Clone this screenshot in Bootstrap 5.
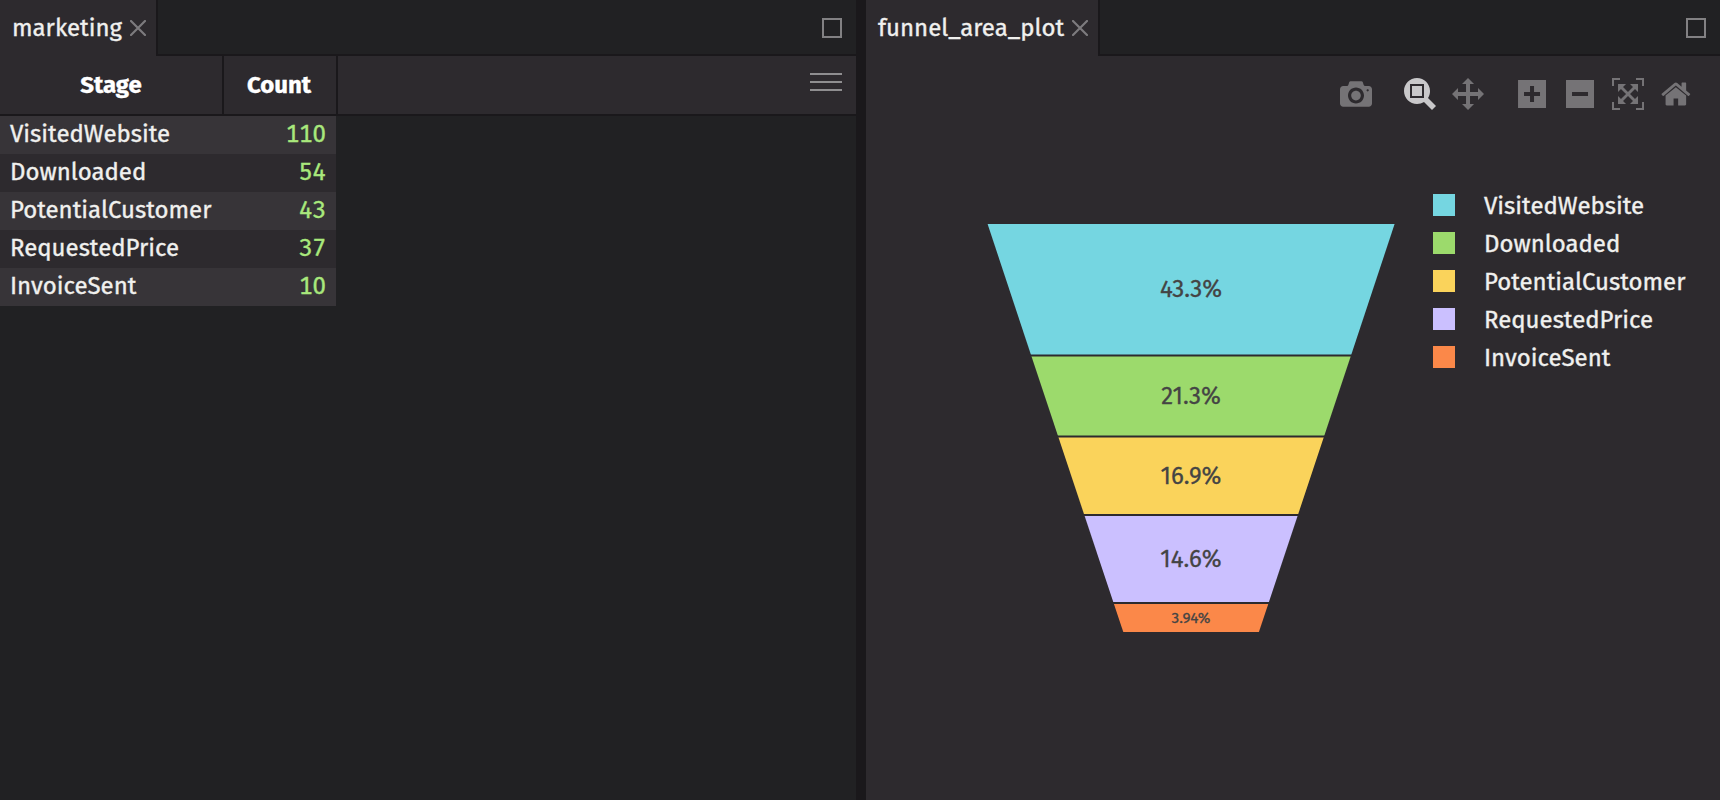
<!DOCTYPE html>
<html lang="en" data-bs-theme="dark">
<head>
<meta charset="utf-8">
<meta name="viewport" content="width=device-width, initial-scale=1">
<title>marketing</title>
<link href="https://cdn.jsdelivr.net/npm/bootstrap@5.3.0/dist/css/bootstrap.min.css" rel="stylesheet">
<style>
  :root { --line: #1a181b; --pane: #2d2a2e; --deep: #212123; --zebra: #373438; --ink: #f0f0ee; --muted: #757376; }
  body { font-family: "Fira Sans", "Noto Sans", sans-serif; font-size: 24px; line-height: 38px; color: var(--ink); background: var(--line); white-space: nowrap; -webkit-text-stroke: .35px; }
  .pane { background: var(--deep); min-width: 0; }
  .pane-left { width: 856px; }
  .pane-right { width: 854px; }
  .tab-strip { height: 56px; }
  .doc-tab { background: var(--pane); border-right: 2px solid var(--line); padding-left: 12px; }
  .doc-tab svg { margin-right: 10px; }
  .strip-rest { border-bottom: 2px solid var(--line); padding-right: 14px; }
  .max-box { width: 20px; height: 20px; border: 2px solid #828183; margin-bottom: -2px; }
  .grid-head { height: 60px; background: var(--pane); border-bottom: 2px solid var(--line); color: #fff; }
  .grid-head > .col-head { border-right: 2px solid var(--line); height: 58px; line-height: 58px; }
  .w-stage { width: 224px; }
  .w-count { width: 114px; padding-right: 2px; }
  .burger { width: 32px; height: 18px; margin: 17px 14px 0 0; }
  .burger i { display: block; height: 2px; background: #8f8e90; }
  .grid-rows { width: 336px; }
  .grid-line { height: 38px; line-height: 36px; padding: 0 10px; background: var(--pane); }
  .grid-line:nth-child(odd) { background: var(--zebra); }
  .num { color: #a9e87c; font-variant-numeric: tabular-nums; }
  .plot-body { background: var(--pane); }
  .modebar { height: 76px; padding: 22px 20px 0 0; }
  .modebar button { width: 48px; height: 32px; border: 0; background: none; padding: 0; fill: var(--muted); }
  .modebar button.is-on { fill: #c9c8ca; }
  .modebar svg { display: block; margin: auto; height: 32px; }
  .funnel { width: 567px; height: 668px; }
  .funnel text { fill: #444; stroke: #444; stroke-width: .3px; text-anchor: middle; }
  .legend-list { padding-top: 54px; }
  .key-box { width: 22px; height: 22px; margin-right: 29px; }
  .legend-list > div { height: 38px; }
  .key-box + span { line-height: 36px; padding-top: 2px; }
</style>
<script src="https://cdn.jsdelivr.net/npm/bootstrap@5.3.0/dist/js/bootstrap.bundle.min.js"></script>
</head>
<body class="vh-100 overflow-hidden d-flex justify-content-between">

<section class="pane pane-left d-flex flex-column">
  <div class="tab-strip d-flex">
    <div class="doc-tab d-flex align-items-center justify-content-between" style="width:158px"><span>marketing</span>
      <svg width="16" height="16" viewBox="0 0 16 16"><path d="M1 1 15 15M15 1 1 15" stroke="#7d7b7e" stroke-width="2.2" stroke-linecap="round"/></svg></div>
    <div class="strip-rest flex-grow-1 d-flex align-items-center justify-content-end"><div class="max-box"></div></div>
  </div>
  <div class="grid-head d-flex fw-bold text-center">
    <div class="col-head w-stage">Stage</div>
    <div class="col-head w-count">Count</div>
    <div class="burger ms-auto d-flex flex-column justify-content-between"><i></i><i></i><i></i></div>
  </div>
  <div class="grid-rows">
    <div class="grid-line d-flex justify-content-between"><span>VisitedWebsite</span><span class="num">110</span></div>
    <div class="grid-line d-flex justify-content-between"><span>Downloaded</span><span class="num">54</span></div>
    <div class="grid-line d-flex justify-content-between"><span>PotentialCustomer</span><span class="num">43</span></div>
    <div class="grid-line d-flex justify-content-between"><span>RequestedPrice</span><span class="num">37</span></div>
    <div class="grid-line d-flex justify-content-between"><span>InvoiceSent</span><span class="num">10</span></div>
  </div>
</section>

<section class="pane pane-right d-flex flex-column">
  <div class="tab-strip d-flex">
    <div class="doc-tab d-flex align-items-center justify-content-between" style="width:234px"><span>funnel_area_plot</span>
      <svg width="16" height="16" viewBox="0 0 16 16"><path d="M1 1 15 15M15 1 1 15" stroke="#7d7b7e" stroke-width="2.2" stroke-linecap="round"/></svg></div>
    <div class="strip-rest flex-grow-1 d-flex align-items-center justify-content-end"><div class="max-box"></div></div>
  </div>
  <div class="plot-body flex-grow-1">
    <div class="modebar d-flex justify-content-end align-items-start">
      <button class="me-3" aria-label="Download plot"><svg viewBox="0 0 1000 1000"><path transform="matrix(1 0 0 -1 0 850)" d="m500 450c-83 0-150-67-150-150 0-83 67-150 150-150 83 0 150 67 150 150 0 83-67 150-150 150z m400 150h-120c-16 0-34 13-39 29l-31 93c-6 15-23 28-40 28h-340c-16 0-34-13-39-28l-31-94c-6-15-23-28-40-28h-120c-55 0-100-45-100-100v-450c0-55 45-100 100-100h800c55 0 100 45 100 100v450c0 55-45 100-100 100z m-400-550c-138 0-250 112-250 250 0 138 112 250 250 250 138 0 250-112 250-250 0-138-112-250-250-250z m365 380c-19 0-35 16-35 35 0 19 16 35 35 35 19 0 35-16 35-35 0-19-16-35-35-35z"/></svg></button>
      <button class="is-on" aria-label="Zoom"><svg viewBox="0 0 1000 1000"><path transform="matrix(1 0 0 -1 0 850)" d="m1000-25l-250 251c40 63 63 138 63 218 0 224-182 406-407 406-224 0-406-182-406-406s183-406 407-406c80 0 155 22 218 62l250-250 125 125z m-812 250l0 438 437 0 0-438-437 0z m62 375l313 0 0-312-313 0 0 312z"/></svg></button>
      <button class="me-3" aria-label="Pan"><svg viewBox="0 0 1000 1000"><path transform="matrix(1 0 0 -1 0 850)" d="m1000 350l-187 188 0-125-250 0 0 250 125 0-188 187-187-187 125 0 0-250-250 0 0 125-188-188 186-187 0 125 252 0 0-250-125 0 187-188 188 188-125 0 0 250 250 0 0-126 187 188z"/></svg></button>
      <button aria-label="Zoom in"><svg viewBox="0 0 875 1000"><path transform="matrix(1 0 0 -1 0 850)" d="m1 787l0-875 875 0 0 875-875 0z m687-500l-187 0 0-187-125 0 0 187-188 0 0 125 188 0 0 187 125 0 0-187 187 0 0-125z"/></svg></button>
      <button aria-label="Zoom out"><svg viewBox="0 0 875 1000"><path transform="matrix(1 0 0 -1 0 850)" d="m0 788l0-876 875 0 0 876-875 0z m688-500l-500 0 0 125 500 0 0-125z"/></svg></button>
      <button aria-label="Autoscale"><svg viewBox="0 0 1000 1000"><path transform="matrix(1 0 0 -1 0 850)" d="m250 850l-187 0-63 0 0-62 0-188 63 0 0 188 187 0 0 62z m688 0l-188 0 0-62 188 0 0-188 62 0 0 188 0 62-62 0z m-875-938l0 188-63 0 0-188 0-62 63 0 187 0 0 62-187 0z m875 188l0-188-188 0 0-62 188 0 62 0 0 62 0 188-62 0z m-125 188l-1 0-93-94-156 156 156 156 92-93 2 0 0 250-250 0 0-2 93-92-156-156-156 156 94 92 0 2-250 0 0-250 0 0 93 93 157-156-157-156-93 94 0 0 0-250 250 0 0 0-94 93 156 157 156-157-93-93 0 0 250 0 0 250z"/></svg></button>
      <button aria-label="Reset axes"><svg viewBox="0 0 928.6 1000"><path transform="matrix(1 0 0 -1 0 850)" d="m786 296v-267q0-15-11-26t-25-10h-214v214h-143v-214h-214q-15 0-25 10t-11 26v267q0 1 0 2t0 2l321 264 321-264q1-1 1-4z m124 39l-34-41q-5-5-12-6h-2q-7 0-12 3l-386 322-386-322q-7-4-13-4-7 2-12 7l-35 41q-4 5-3 13t6 12l401 334q18 15 42 15t43-15l136-114v109q0 8 5 13t13 5h107q8 0 13-5t5-13v-227l122-102q5-5 6-12t-4-13z"/></svg></button>
    </div>
    <div class="d-flex">
      <!-- viewBox keeps window coordinates, so the funnel corners can be read directly -->
      <svg class="funnel" viewBox="866 132 567 668">
        <path fill="#75d6e1" d="M987.6 224H1394.6L1351 355.5H1031.2Z"/>
        <path fill="#9cda6c" d="M1031.2 355.5H1351L1324.1 436.3H1058.1Z"/>
        <path fill="#fad35b" d="M1058.1 436.3H1324.1L1297.9 515H1084.3Z"/>
        <path fill="#cbc0ff" d="M1084.3 515H1297.9L1268.6 603H1113.6Z"/>
        <path fill="#fb8849" d="M1113.6 603H1268.6L1258.9 632H1123.3Z"/>
        <path stroke="#2d2a2e" stroke-width="2" d="M1029 355.6H1353M1056 436.4H1326M1082 515H1300M1111 603H1271"/>
        <text x="1191" y="297">43.3%</text>
        <text x="1191" y="404">21.3%</text>
        <text x="1191" y="484">16.9%</text>
        <text x="1191" y="567">14.6%</text>
        <text x="1191" y="623.3" font-size="15.3">3.94%</text>
      </svg>
      <div class="legend-list">
        <div class="d-flex align-items-center"><span class="key-box" style="background:#75d6e1"></span><span>VisitedWebsite</span></div>
        <div class="d-flex align-items-center"><span class="key-box" style="background:#9cda6c"></span><span>Downloaded</span></div>
        <div class="d-flex align-items-center"><span class="key-box" style="background:#fad35b"></span><span>PotentialCustomer</span></div>
        <div class="d-flex align-items-center"><span class="key-box" style="background:#cbc0ff"></span><span>RequestedPrice</span></div>
        <div class="d-flex align-items-center"><span class="key-box" style="background:#fb8849"></span><span>InvoiceSent</span></div>
      </div>
    </div>
  </div>
</section>
</body>
</html>
